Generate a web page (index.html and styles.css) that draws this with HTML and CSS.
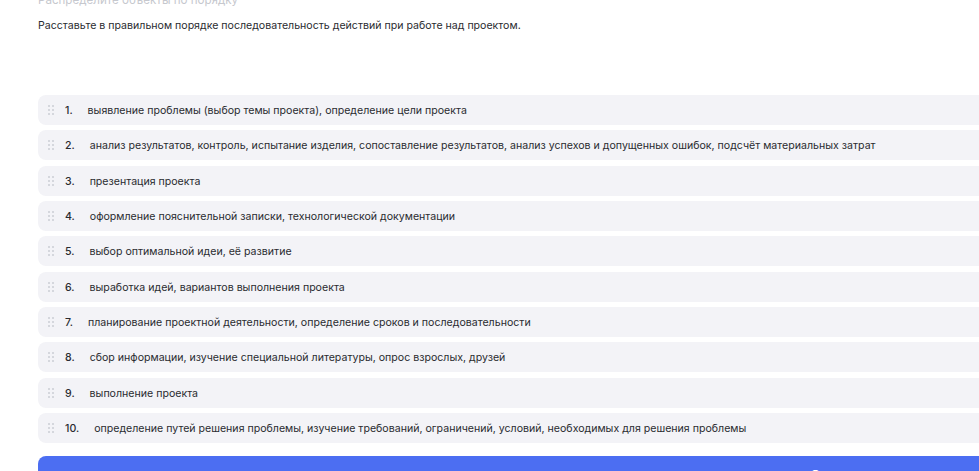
FILE: index.html
```html
<!DOCTYPE html>
<html lang="ru">
  <head>
    <meta charset="UTF-8" />
    <meta name="viewport" content="width=device-width, initial-scale=1.0" />
    <title>Распределите объекты по порядку</title>
    <link rel="stylesheet" href="styles.css">
  </head>
  <body>
    <div class="task">
      <div class="task-title">Распределите объекты по порядку</div>
      <p class="task-text">
        Расставьте в правильном порядке последовательность действий при работе над проектом.
      </p>

      <ul class="order-list">
        <li class="order-item">
          <span class="handle"><svg width="7" height="11" viewBox="0 0 7 11"><g fill="#d5d7dd"><rect x="0" y="0" width="2" height="2"/><rect x="4" y="0" width="2" height="2"/><rect x="0" y="4" width="2" height="2"/><rect x="4" y="4" width="2" height="2"/><rect x="0" y="8" width="2" height="2"/><rect x="4" y="8" width="2" height="2"/></g></svg></span>
          <span class="order-num">1.</span>
          <span class="order-text">выявление проблемы (выбор темы проекта), определение цели проекта</span>
        </li>
        <li class="order-item">
          <span class="handle"><svg width="7" height="11" viewBox="0 0 7 11"><g fill="#d5d7dd"><rect x="0" y="0" width="2" height="2"/><rect x="4" y="0" width="2" height="2"/><rect x="0" y="4" width="2" height="2"/><rect x="4" y="4" width="2" height="2"/><rect x="0" y="8" width="2" height="2"/><rect x="4" y="8" width="2" height="2"/></g></svg></span>
          <span class="order-num">2.</span>
          <span class="order-text">анализ результатов, контроль, испытание изделия, сопоставление результатов, анализ успехов и допущенных ошибок, подсчёт материальных затрат</span>
        </li>
        <li class="order-item">
          <span class="handle"><svg width="7" height="11" viewBox="0 0 7 11"><g fill="#d5d7dd"><rect x="0" y="0" width="2" height="2"/><rect x="4" y="0" width="2" height="2"/><rect x="0" y="4" width="2" height="2"/><rect x="4" y="4" width="2" height="2"/><rect x="0" y="8" width="2" height="2"/><rect x="4" y="8" width="2" height="2"/></g></svg></span>
          <span class="order-num">3.</span>
          <span class="order-text">презентация проекта</span>
        </li>
        <li class="order-item">
          <span class="handle"><svg width="7" height="11" viewBox="0 0 7 11"><g fill="#d5d7dd"><rect x="0" y="0" width="2" height="2"/><rect x="4" y="0" width="2" height="2"/><rect x="0" y="4" width="2" height="2"/><rect x="4" y="4" width="2" height="2"/><rect x="0" y="8" width="2" height="2"/><rect x="4" y="8" width="2" height="2"/></g></svg></span>
          <span class="order-num">4.</span>
          <span class="order-text">оформление пояснительной записки, технологической документации</span>
        </li>
        <li class="order-item">
          <span class="handle"><svg width="7" height="11" viewBox="0 0 7 11"><g fill="#d5d7dd"><rect x="0" y="0" width="2" height="2"/><rect x="4" y="0" width="2" height="2"/><rect x="0" y="4" width="2" height="2"/><rect x="4" y="4" width="2" height="2"/><rect x="0" y="8" width="2" height="2"/><rect x="4" y="8" width="2" height="2"/></g></svg></span>
          <span class="order-num">5.</span>
          <span class="order-text">выбор оптимальной идеи, её развитие</span>
        </li>
        <li class="order-item">
          <span class="handle"><svg width="7" height="11" viewBox="0 0 7 11"><g fill="#d5d7dd"><rect x="0" y="0" width="2" height="2"/><rect x="4" y="0" width="2" height="2"/><rect x="0" y="4" width="2" height="2"/><rect x="4" y="4" width="2" height="2"/><rect x="0" y="8" width="2" height="2"/><rect x="4" y="8" width="2" height="2"/></g></svg></span>
          <span class="order-num">6.</span>
          <span class="order-text">выработка идей, вариантов выполнения проекта</span>
        </li>
        <li class="order-item">
          <span class="handle"><svg width="7" height="11" viewBox="0 0 7 11"><g fill="#d5d7dd"><rect x="0" y="0" width="2" height="2"/><rect x="4" y="0" width="2" height="2"/><rect x="0" y="4" width="2" height="2"/><rect x="4" y="4" width="2" height="2"/><rect x="0" y="8" width="2" height="2"/><rect x="4" y="8" width="2" height="2"/></g></svg></span>
          <span class="order-num">7.</span>
          <span class="order-text">планирование проектной деятельности, определение сроков и последовательности</span>
        </li>
        <li class="order-item">
          <span class="handle"><svg width="7" height="11" viewBox="0 0 7 11"><g fill="#d5d7dd"><rect x="0" y="0" width="2" height="2"/><rect x="4" y="0" width="2" height="2"/><rect x="0" y="4" width="2" height="2"/><rect x="4" y="4" width="2" height="2"/><rect x="0" y="8" width="2" height="2"/><rect x="4" y="8" width="2" height="2"/></g></svg></span>
          <span class="order-num">8.</span>
          <span class="order-text">сбор информации, изучение специальной литературы, опрос взрослых, друзей</span>
        </li>
        <li class="order-item">
          <span class="handle"><svg width="7" height="11" viewBox="0 0 7 11"><g fill="#d5d7dd"><rect x="0" y="0" width="2" height="2"/><rect x="4" y="0" width="2" height="2"/><rect x="0" y="4" width="2" height="2"/><rect x="4" y="4" width="2" height="2"/><rect x="0" y="8" width="2" height="2"/><rect x="4" y="8" width="2" height="2"/></g></svg></span>
          <span class="order-num">9.</span>
          <span class="order-text">выполнение проекта</span>
        </li>
        <li class="order-item">
          <span class="handle"><svg width="7" height="11" viewBox="0 0 7 11"><g fill="#d5d7dd"><rect x="0" y="0" width="2" height="2"/><rect x="4" y="0" width="2" height="2"/><rect x="0" y="4" width="2" height="2"/><rect x="4" y="4" width="2" height="2"/><rect x="0" y="8" width="2" height="2"/><rect x="4" y="8" width="2" height="2"/></g></svg></span>
          <span class="order-num">10.</span>
          <span class="order-text">определение путей решения проблемы, изучение требований, ограничений, условий, необходимых для решения проблемы</span>
        </li>
      </ul>

      <button class="submit-btn">Ответить</button>
    </div>
  </body>
</html>
```

FILE: styles.css
```css
* {
  margin: 0;
  padding: 0;
  box-sizing: border-box;
}

body {
  font-family: 'Inter', 'Roboto', sans-serif;
  background: #ffffff;
  color: #2a2b30;
  overflow: hidden;
}

.task {
  width: 1646px;
  padding-left: 38px;
}

.task-title {
  margin-top: -8px;
  font-size: 11.6px;
  line-height: 16px;
  color: #c6c8ce;
}

.task-text {
  margin-top: 10px;
  font-size: 10.6px;
  line-height: 16px;
  color: #2a2b30;
}

.order-list {
  list-style: none;
  margin-top: 61px;
  display: flex;
  flex-direction: column;
  gap: 5.33px;
}

.order-item {
  height: 30px;
  display: flex;
  align-items: center;
  padding-left: 10px;
  padding-top: 1px;
  background: #f3f3f7;
  border-radius: 8px;
  font-size: 10.6px;
}

.handle {
  display: flex;
  width: 17px;
}

.order-num {
  font-weight: 500;
  margin-right: 15px;
}

.order-text {
  color: #2a2b30;
}

.submit-btn {
  display: block;
  width: 100%;
  height: 40px;
  margin-top: 13px;
  border: none;
  border-radius: 8px;
  background: #4c6ef2;
  color: #ffffff;
  font-family: inherit;
  font-size: 14px;
  font-weight: 500;
}
```
